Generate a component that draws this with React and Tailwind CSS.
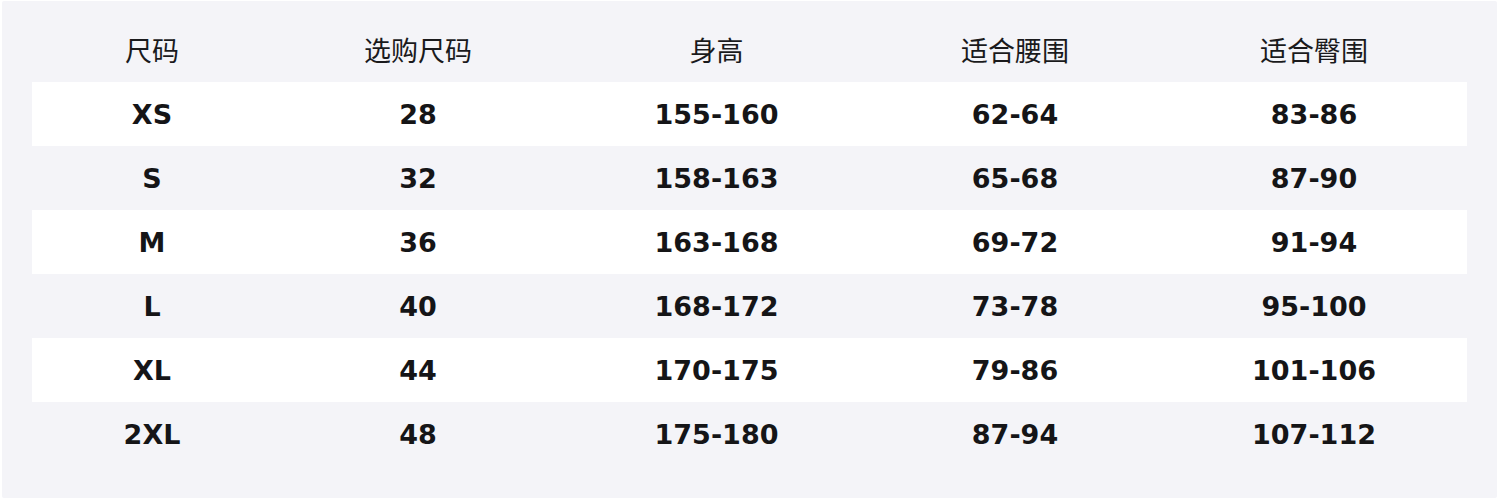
export default function App() {
  const headers = ["尺码", "选购尺码", "身高", "适合腰围", "适合臀围"];
  const rows = [
    ["XS", "28", "155-160", "62-64", "83-86"],
    ["S", "32", "158-163", "65-68", "87-90"],
    ["M", "36", "163-168", "69-72", "91-94"],
    ["L", "40", "168-172", "73-78", "95-100"],
    ["XL", "44", "170-175", "79-86", "101-106"],
    ["2XL", "48", "175-180", "87-94", "107-112"],
  ];
  return (
    <div className="w-[1500px] h-[501px] bg-white pl-[2px] pt-[1px]">
      <div className="w-[1495px] h-[497px] bg-[#f4f4f8] px-[30px] pt-[17px] rounded-[2px]">
        <div className="grid grid-cols-[240px_292px_305px_292px_306px] h-[64px] items-center text-[27px] text-[#1a1a1c] font-['Noto_Sans_CJK_SC',sans-serif] font-normal">
          {headers.map((h) => (
            <div key={h} className="text-center leading-none pb-[1px]">{h}</div>
          ))}
        </div>
        {rows.map((r, i) => (
          <div
            key={i}
            className={`grid grid-cols-[240px_292px_305px_292px_306px] h-[64px] items-center text-[27px] font-bold text-[#151517] font-['DejaVu_Sans',sans-serif] ${i % 2 === 0 ? "bg-white" : ""}`}
          >
            {r.map((c, j) => (
              <div key={j} className="text-center leading-none">{c}</div>
            ))}
          </div>
        ))}
      </div>
    </div>
  );
}
